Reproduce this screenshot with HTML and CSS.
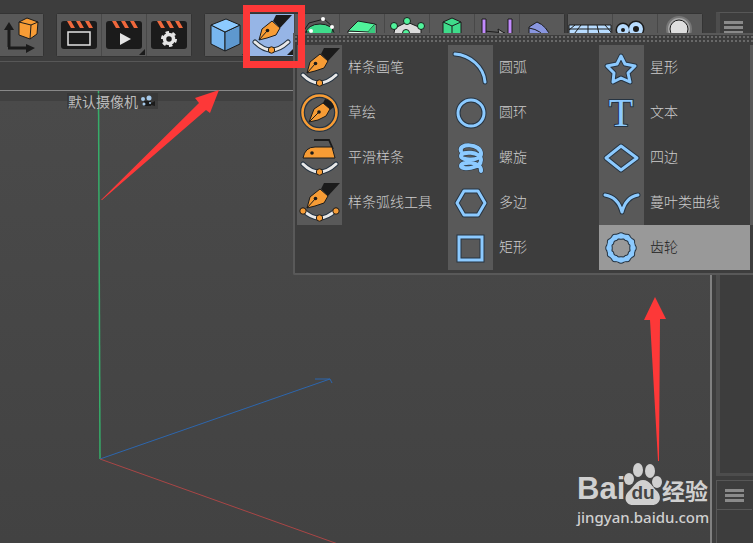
FILE: index.html
```
<!DOCTYPE html>
<html lang="zh-CN">
<head>
    <meta charset="UTF-8">
    <meta name="viewport" content="width=device-width, initial-scale=1.0">
    <title>样条工具</title>
    <link rel="stylesheet" href="styles.css">
</head>
<body>
    <svg class="defs" aria-hidden="true">
        <defs>
            <g id="nib">
                <path d="M27 3H43L31 16L24 9Z" fill="#1b1b1b"/>
                <path class="orange" d="M10 28L13 17L23 9L31 16L27 23L18 26Z"/>
                <path class="ink" d="M10 28L18 19"/>
                <circle cx="18.500" cy="18.500" r="1.800" fill="#1b1b1b"/>
            </g>
            <g id="bow">
                <path class="edge" d="M6 30Q22 46 39 30"/>
                <path class="white-line" d="M6 30Q22 46 39 30"/>
                <circle class="orange" cx="22.500" cy="38" r="3.200"/>
            </g>
            <g id="clap">
                <rect x="3" y="7" width="36" height="28" rx="3" fill="#1b1b1b"/>
                <path d="M9 7h4l4 7h-4zM18 7h4l4 7h-4zM27 7h4l4 7h-4z" fill="#f0683c"/>
            </g>
        </defs>
    </svg>

    <div class="app">
        <header class="toolbar">
            <div class="group group-first">
                <button class="tool" aria-label="坐标系统">
                    <svg viewBox="0 0 44 42">
                        <path d="M10 33V12M9 34H31" stroke="#1b1b1b" stroke-width="3" fill="none"/>
                        <path d="M5 16L10 8L15 16ZM27 30L36 34L27 39Z" fill="#1b1b1b"/>
                        <path class="orange" d="M20 8L28 4L39 8L38 20L31 25L20 21Z"/>
                        <path class="ink" d="M20 8L32 11L39 8M32 11L31 25"/>
                    </svg>
                </button>
            </div>
            <div class="group">
                <button class="tool" aria-label="渲染活动视图">
                    <svg viewBox="-1 0 44 42"><use href="#clap"/><rect x="10" y="18" width="22" height="13" fill="none" stroke="#e4e4e4" stroke-width="1.500"/></svg>
                </button>
                <button class="tool more" aria-label="渲染到图片查看器">
                    <svg viewBox="-1 0 44 42"><use href="#clap"/><path d="M17 19L28 25L17 31Z" fill="#e4e4e4"/></svg>
                </button>
                <button class="tool" aria-label="编辑渲染设置">
                    <svg viewBox="-1 0 44 42">
                        <use href="#clap"/>
                        <circle cx="21" cy="25" r="6" fill="none" stroke="#e4e4e4" stroke-width="4" pathLength="48" stroke-dasharray="4 4"/>
                        <circle cx="21" cy="25" r="4.500" fill="none" stroke="#e4e4e4" stroke-width="3.500"/>
                    </svg>
                </button>
            </div>
            <div class="group">
                <button class="tool more" aria-label="立方体">
                    <svg viewBox="0 0 44 42">
                        <path d="M6 11L20 18V37L6 30Z" fill="#78b6ef" stroke="#1b1b1b"/>
                        <path d="M35 11L20 18V37L35 30Z" fill="#5e98cf" stroke="#1b1b1b"/>
                        <path d="M6 11L21 5L35 11L20 18Z" fill="#8ccaff" stroke="#1b1b1b"/>
                    </svg>
                </button>
                <button class="tool more active" aria-label="样条画笔">
                    <svg viewBox="1 2 44 42"><use href="#nib"/><use href="#bow"/></svg>
                </button>
                <button class="tool" aria-label="细分曲面">
                    <svg viewBox="0 0 44 42">
                        <ellipse cx="25" cy="19" rx="14" ry="9" fill="#3fdc8b" stroke="#1b1b1b"/>
                        <path class="ink" d="M14 9L29 5L38 13L36 24M14 9L8 18H17"/>
                        <circle cx="28" cy="5" r="2" fill="#fff"/><circle cx="37" cy="13" r="2" fill="#fff"/><circle cx="16" cy="17" r="2" fill="#fff"/>
                    </svg>
                </button>
                <button class="tool" aria-label="挤压">
                    <svg viewBox="0 0 44 42">
                        <path d="M8 17H28L36 10V24H8Z" fill="#dfffee" stroke="#1b1b1b"/>
                        <path d="M8 17L18 7L35 10L28 18Z" fill="#50f49b" stroke="#1b1b1b"/>
                        <path d="M28 18L35 10V24H26Z" fill="#38cb7d"/>
                    </svg>
                </button>
                <button class="tool" aria-label="阵列">
                    <svg viewBox="0 0 44 42">
                        <path d="M10 14L22 8L36 14V24H8Z" fill="#dcdcdc" stroke="#1b1b1b"/>
                        <g fill="#50f49b" stroke="#1b1b1b"><circle cx="22" cy="7" r="3.500"/><circle cx="9" cy="12" r="3.500"/><circle cx="36" cy="12" r="3.500"/><circle cx="21" cy="19" r="3.500"/></g>
                    </svg>
                </button>
                <button class="tool" aria-label="体积生成">
                    <svg viewBox="0 0 44 42">
                        <path d="M13 8L22 4L31 8V28L22 32L13 28Z" fill="#3fdc8b" stroke="#1b1b1b"/>
                        <path class="ink" d="M13 8L22 12L31 8M22 12V30"/>
                    </svg>
                </button>
                <button class="tool" aria-label="变形器">
                    <svg viewBox="0 0 44 42">
                        <path class="ink" d="M9 17L30 19"/>
                        <path d="M23 15L31 20L25 26Z" fill="#9a9a9a" stroke="#1b1b1b"/>
                        <path d="M7 5h4v26h-4zM33 5h4v26h-4z" fill="#c38bff" stroke="#1b1b1b"/>
                    </svg>
                </button>
                <button class="tool" aria-label="弯曲">
                    <svg viewBox="0 0 44 42"><path d="M9 22V13L17 8Q27 12 31 24Z" fill="#8996e0" stroke="#1b1b1b"/><path class="ink" d="M9 14Q22 16 26 26"/></svg>
                </button>
            </div>
            <div class="group group-last">
                <button class="tool" aria-label="地面">
                    <svg viewBox="0 0 44 42"><path d="M1 11H43V32H1Z" fill="#b8dcff" stroke="#1b1b1b"/><path class="ink" d="M1 15H43M1 21H43M13 11L3 24M20 11V24M29 11L32 24M37 11L43 18M7 11L1 16"/></svg>
                </button>
                <button class="tool" aria-label="摄像机">
                    <svg viewBox="0 0 44 42">
                        <g fill="#1b1b1b" stroke="#1b1b1b" stroke-width="7"><circle cx="10" cy="16" r="4"/><circle cx="23" cy="15" r="5"/></g>
                        <g fill="#1b1b1b" stroke="#b8dcff" stroke-width="4"><circle cx="10" cy="16" r="4"/><circle cx="23" cy="15" r="5"/></g>
                    </svg>
                </button>
                <button class="tool" aria-label="灯光">
                    <svg viewBox="0 0 44 42"><circle cx="21" cy="15" r="13" fill="#777"/><circle cx="21" cy="15" r="11" fill="#aaa"/><circle cx="21" cy="15" r="9" fill="#dedede" stroke="#1b1b1b"/></svg>
                </button>
            </div>
        </header>

        <div class="workspace">
            <main class="viewport">
                <svg class="scene" aria-hidden="true">
                    <path d="M98.500 0L100 368" stroke="#36ad69" stroke-width="1.500"/>
                    <path d="M100 368L330 288M315 288H330L332 292" stroke="#2d66ad"/>
                    <path d="M100 368L338 453" stroke="#a94646"/>
                </svg>
                <div class="camera">
                    <span>默认摄像机</span>
                    <svg width="16" height="12" viewBox="0 0 16 12" aria-hidden="true">
                        <path d="M4 6H11V11H4ZM11 8L15 6V11L11 10Z" fill="#1b1b1b"/>
                        <g fill="#a5c8e8"><circle cx="3" cy="4" r="2"/><circle cx="9" cy="3" r="2.500"/><circle cx="4" cy="9" r="1.500"/><circle cx="10" cy="8" r="1"/></g>
                    </svg>
                </div>
                <div class="watermark">
                    <div class="brand">
                        <span class="bai">Bai</span>
                        <span class="paw">
                            <svg viewBox="0 0 38 42" aria-hidden="true">
                                <g fill="#d0d0d0">
                                    <ellipse cx="5" cy="16" rx="5" ry="6"/><ellipse cx="14" cy="7" rx="5" ry="7"/><ellipse cx="26" cy="8" rx="5" ry="7"/><ellipse cx="33" cy="19" rx="5" ry="6"/>
                                    <path d="M19 17C26 17 28 24 33 28C39 35 35 42 28 42H9C2 42 -1 35 4 29C10 24 12 17 19 17Z"/>
                                </g>
                            </svg>
                            <span class="du">du</span>
                        </span>
                        <span class="jingyan">经验</span>
                    </div>
                    <div class="site">jingyan.baidu.com</div>
                </div>
            </main>
        </div>

        <aside class="side">
            <section class="panel panel-main">
                <button class="burger" aria-label="对象菜单"><i></i><i></i><i></i></button>
            </section>
            <section class="panel">
                <button class="burger" aria-label="属性菜单"><i></i><i></i><i></i></button>
            </section>
        </aside>

        <nav class="menu" aria-label="样条">
            <div class="grip"></div>
            <div class="columns">
                <div class="column">
                    <button class="item"><svg viewBox="0 0 45 45"><use href="#nib"/><use href="#bow"/></svg><span>样条画笔</span></button>
                    <button class="item"><svg viewBox="0 0 45 45">
                        <circle cx="22.500" cy="22.500" r="17" class="edge"/>
                        <circle cx="22.500" cy="22.500" r="17" fill="none" stroke="#f79c35" stroke-width="2.500"/>
                        <path d="M28 9Q35 10 37 17L33 20L26 13Z" fill="#1b1b1b"/>
                        <path class="orange" d="M12 32L17 19L26 13L33 19L29 26L21 30Z"/>
                        <path class="ink" d="M12 32L22 22"/><circle cx="22" cy="22" r="1.800" fill="#1b1b1b"/>
                    </svg><span>草绘</span></button>
                    <button class="item"><svg viewBox="0 0 45 45">
                        <path d="M17 5H32L36 14" fill="none" stroke="#1b1b1b" stroke-width="1.800"/>
                        <path class="orange" d="M6 23Q8 12 18 12H35L38 23Z"/>
                        <circle cx="15" cy="18" r="1.800" fill="#1b1b1b"/><use href="#bow" y="-1"/>
                    </svg><span>平滑样条</span></button>
                    <button class="item"><svg viewBox="0 0 45 45"><use href="#nib"/><use href="#bow"/><circle class="orange" cx="6" cy="31" r="3.200"/><circle class="orange" cx="39" cy="31" r="3.200"/></svg><span>样条弧线工具</span></button>
                </div>
                <div class="column">
                    <button class="item"><svg viewBox="0 0 45 45"><path class="edge" d="M7 9C22 10 36 22 37 37"/><path class="blue-line" d="M7 9C22 10 36 22 37 37"/></svg><span>圆弧</span></button>
                    <button class="item"><svg viewBox="0 0 45 45"><circle class="edge" cx="23" cy="23" r="13"/><circle class="blue-line" cx="23" cy="23" r="13"/></svg><span>圆环</span></button>
                    <button class="item"><svg viewBox="0 0 45 45">
                        <path class="edge" d="M13 16C10 8 33 8 33 19C33 26 13 26 13 21C13 16 33 16 33 25C33 34 13 35 13 31C13 26 34 26 33 36"/>
                        <path class="blue-line coil" d="M13 16C10 8 33 8 33 19C33 26 13 26 13 21C13 16 33 16 33 25C33 34 13 35 13 31C13 26 34 26 33 36"/>
                    </svg><span>螺旋</span></button>
                    <button class="item"><svg viewBox="0 0 45 45"><path class="edge" d="M9 23L16 11H30L37 23L30 35H16Z"/><path class="blue-line" d="M9 23L16 11H30L37 23L30 35H16Z"/></svg><span>多边</span></button>
                    <button class="item"><svg viewBox="0 0 45 45"><path class="edge square" d="M11 12H34V35H11Z"/><path class="blue-line square" d="M11 12H34V35H11Z"/></svg><span>矩形</span></button>
                </div>
                <div class="column">
                    <button class="item"><svg viewBox="0 0 45 45"><path class="edge" d="M22 11L26 19L36 21L29 28L31 37L22 33L14 37L15 28L8 21L18 19Z"/><path class="blue-line" d="M22 11L26 19L36 21L29 28L31 37L22 33L14 37L15 28L8 21L18 19Z"/></svg><span>星形</span></button>
                    <button class="item"><svg viewBox="0 0 45 45"><text class="letter" x="22" y="36" text-anchor="middle">T</text></svg><span>文本</span></button>
                    <button class="item"><svg viewBox="0 0 45 45"><path class="edge" d="M7 23L22 11L38 23L22 35Z"/><path class="blue-line" d="M7 23L22 11L38 23L22 35Z"/></svg><span>四边</span></button>
                    <button class="item"><svg viewBox="0 0 45 45"><path class="edge" d="M6 15Q19 17 23 32Q27 17 39 15"/><path class="blue-line" d="M6 15Q19 17 23 32Q27 17 39 15"/></svg><span>蔓叶类曲线</span></button>
                    <button class="item selected"><svg viewBox="0 0 45 45">
                        <g fill="none" stroke-linecap="round">
                            <circle cx="22" cy="23" r="12" stroke="#263442" stroke-width="7.500" pathLength="12" stroke-dasharray="0 1"/>
                            <circle cx="22" cy="23" r="12" stroke="#263442" stroke-width="6"/>
                            <circle cx="22" cy="23" r="12" stroke="#8ccaff" stroke-width="5.500" pathLength="12" stroke-dasharray="0 1"/>
                            <circle cx="22" cy="23" r="12" stroke="#8ccaff" stroke-width="4"/>
                        </g>
                    </svg><span>齿轮</span></button>
                </div>
                <div class="column column-rest"></div>
            </div>
        </nav>

        <svg class="marks" aria-hidden="true">
            <rect x="246.500" y="8.500" width="55" height="56" fill="none" stroke="#fd3838" stroke-width="7"/>
            <path d="M101 200L199 103L195 98L219 90L210 113L206 110L102 200Z" fill="#fd3838"/>
            <path d="M655 297L666 319H660L659 461H658L650 320H644Z" fill="#fd3838"/>
        </svg>
    </div>
</body>
</html>
```
FILE: styles.css
```
* {
    box-sizing: border-box;
}
body {
    margin: 0;
    background: #3d3d3d;
    color: #cccccc;
    font-family: "Noto Sans CJK SC", sans-serif;
    font-size: 14px;
}
button {
    margin: 0;
    padding: 0;
    border: 0;
    background: none;
    color: inherit;
    font: inherit;
}
.defs {
    position: absolute;
    width: 0;
    height: 0;
}
.app {
    position: relative;
    display: grid;
    grid-template-columns: 1fr 37px;
    grid-template-rows: 62px 1fr;
    column-gap: 4px;
    height: 100vh;
    overflow: hidden;
}

/* toolbar */
.toolbar {
    display: flex;
    gap: 14px;
    padding-top: 14px;
    border-bottom: 1px solid #575757;
    min-width: 0;
}
.group {
    display: flex;
    flex: none;
    gap: 1px;
    height: 42px;
    border-radius: 2px;
    background: #484848;
    box-shadow: 0 0 0 1px #343434;
}
.group-first {
    margin-left: -1px;
}
.group-last {
    margin-left: -10px;
}
.tool {
    position: relative;
    width: 44px;
    height: 42px;
    background: #595959;
}
.tool svg {
    display: block;
    width: 44px;
    height: 42px;
}
.more::after {
    content: "";
    position: absolute;
    right: 1px;
    bottom: 1px;
    border: 3px solid #1b1b1b;
    border-top-color: transparent;
    border-left-color: transparent;
}
.active {
    background: #96b5e6;
}

/* icon strokes */
.orange {
    fill: #f79c35;
    stroke: #1b1b1b;
    stroke-width: 1;
}
.ink {
    fill: none;
    stroke: #1b1b1b;
    stroke-width: 1;
}
.edge {
    fill: none;
    stroke: #263442;
    stroke-width: 5;
    stroke-linecap: round;
    stroke-linejoin: round;
}
.white-line {
    fill: none;
    stroke: #e8e8e8;
    stroke-width: 3;
    stroke-linecap: round;
}
.blue-line {
    fill: none;
    stroke: #8ccaff;
    stroke-width: 3;
    stroke-linecap: round;
    stroke-linejoin: round;
}
.coil {
    stroke-width: 4;
}
.square {
    stroke-linejoin: miter;
}
.letter {
    fill: #8ccaff;
    stroke: #263442;
    stroke-width: 2;
    paint-order: stroke;
    font-family: "Liberation Serif", serif;
    font-size: 40px;
}

/* viewport */
.workspace {
    display: flex;
    padding-top: 28px;
    min-width: 0;
}
.viewport {
    position: relative;
    flex: 1;
    border-top: 1px solid #888888;
    border-right: 2px solid #808080;
    background: linear-gradient(#404040 10px, #4a4a4a 10px, #424242);
    overflow: hidden;
}
.scene {
    position: absolute;
    inset: 0;
    width: 100%;
    height: 100%;
    fill: none;
}
.camera {
    position: absolute;
    left: 67px;
    top: 2px;
    display: flex;
    align-items: center;
    gap: 2px;
    height: 16px;
    padding: 0 2px 0 1px;
    background: rgba(48, 48, 48, 0.5);
    color: #bbbbbb;
    line-height: 16px;
}
.watermark {
    position: absolute;
    right: 0;
    bottom: 14px;
    width: 133px;
    color: #d0d0d0;
}
.brand {
    display: flex;
    align-items: flex-end;
    height: 42px;
}
.bai {
    width: 47px;
    font: bold 31px/32px "Liberation Sans", sans-serif;
}
.paw {
    position: relative;
    width: 38px;
    height: 42px;
}
.paw svg {
    display: block;
    width: 38px;
    height: 42px;
}
.du {
    position: absolute;
    left: 0;
    right: 0;
    bottom: 2px;
    color: #444444;
    font: bold 19px/20px "Liberation Sans", sans-serif;
    text-align: center;
}
.jingyan {
    font-size: 23px;
    font-weight: bold;
    line-height: 30px;
    white-space: nowrap;
}
.site {
    font: 500 15px/24px "Noto Sans", sans-serif;
}

/* right side panels */
.side {
    grid-column: 2;
    grid-row: 1 / 3;
    display: flex;
    flex-direction: column;
    gap: 4px;
    padding-top: 12px;
}
.panel {
    height: 63px;
    border: 1px solid #575757;
    border-right: 0;
    border-bottom: 0;
}
.panel-main {
    flex: 1;
    border-left: 4px solid #4d4d4d;
    border-bottom: 3px solid #4d4d4d;
}
.burger {
    display: flex;
    flex-direction: column;
    justify-content: center;
    align-items: center;
    gap: 2px;
    width: 35px;
    height: 29px;
    border-bottom: 1px solid #575757;
}
.panel-main .burger {
    margin-left: -4px;
}
.burger i {
    width: 19px;
    height: 3px;
    background: #8a8a8a;
}

/* drop-down menu */
.menu {
    position: absolute;
    left: 293px;
    right: 0;
    top: 33px;
    border: solid #595959;
    border-width: 2px 0 2px 2px;
    border-radius: 0 0 0 2px;
    background: #3d3d3d;
}
.grip {
    height: 10px;
    border-bottom: 2px solid #3d3d3d;
    background:
        repeating-linear-gradient(90deg, transparent 0 2px, #3d3d3d 2px 4px),
        repeating-linear-gradient(#3d3d3d 0 1px, #696969 1px 3px, #3d3d3d 3px 4px);
}
.columns {
    display: flex;
    padding: 0 0 3px 2px;
    overflow: hidden;
}
.column {
    flex: none;
    width: 151px;
    height: 225px;
}
.column-rest {
    height: 180px;
    background: #595959;
}
.item {
    display: flex;
    align-items: center;
    gap: 6px;
    width: 100%;
    height: 45px;
    text-align: left;
    white-space: nowrap;
}
.item span {
    padding-bottom: 4px;
    font-weight: 300;
}
.item svg {
    flex: none;
    width: 45px;
    height: 45px;
    background: #595959;
}
.selected,
.selected svg {
    background: #999999;
    color: #1b1b1b;
}

/* highlight box and arrows */
.marks {
    position: absolute;
    left: 0;
    top: 0;
    width: 100%;
    height: 100%;
    pointer-events: none;
}
```
